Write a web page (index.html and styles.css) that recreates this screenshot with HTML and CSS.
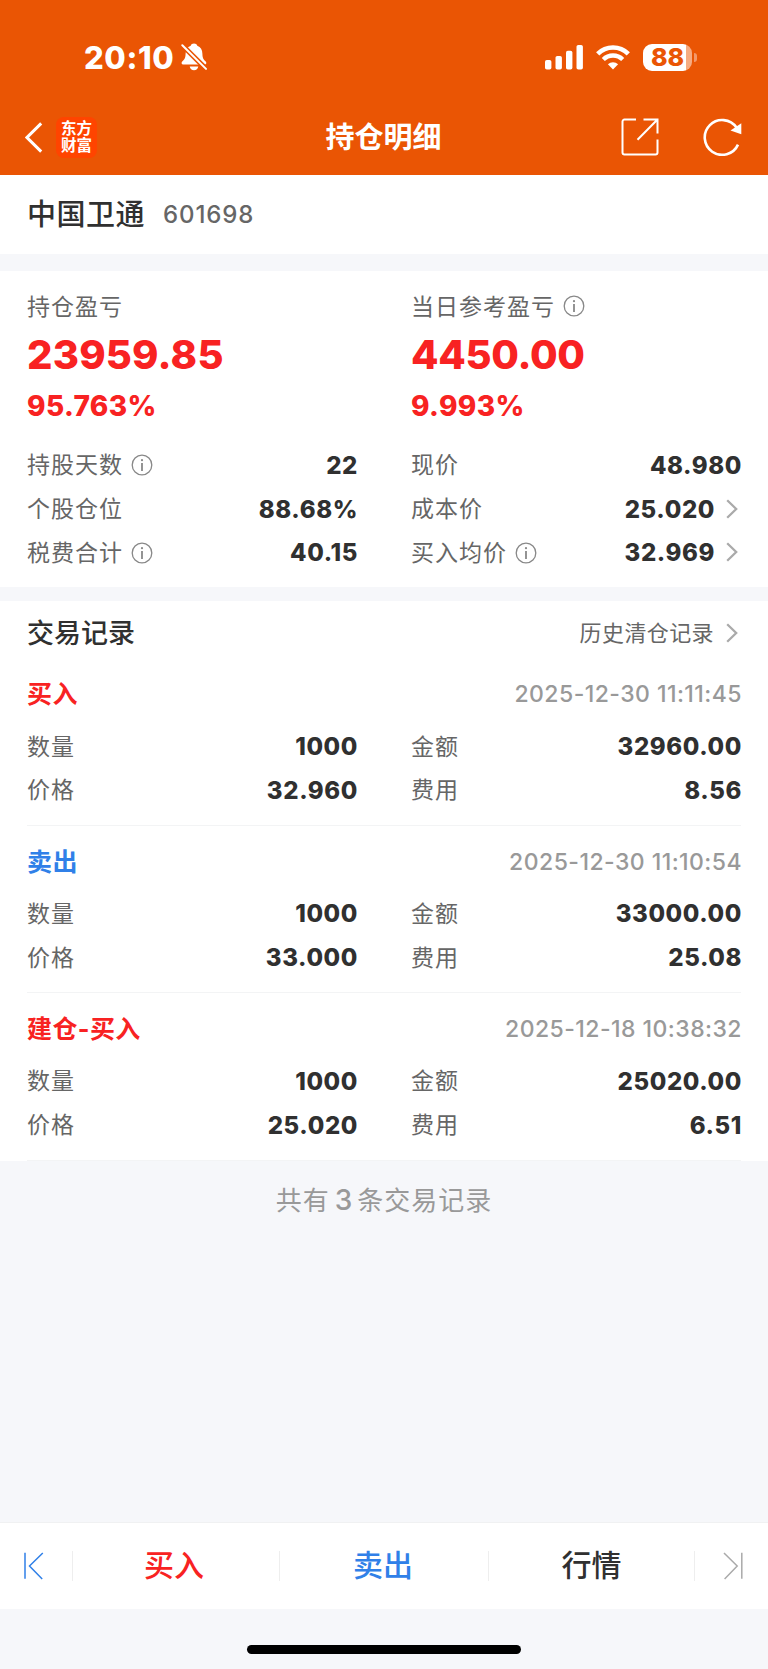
FILE: index.html
```html
<!DOCTYPE html>
<html lang="zh-CN">
<head>
  <meta charset="UTF-8" />
  <meta name="viewport" content="width=device-width, initial-scale=1.0"/>
  <title>持仓明细</title>
  <link rel="stylesheet" href="styles.css">
</head>
<body>
  <!-- shared icons -->
  <svg width="0" height="0" class="sprite">
    <symbol id="info" viewBox="0 0 22 22">
      <circle cx="11" cy="11" r="9.8" fill="none" stroke="currentColor" stroke-width="1.3"/>
      <circle cx="11" cy="6.2" r="1.1" fill="currentColor"/>
      <path d="M11 9v8" stroke="currentColor" stroke-width="1.8"/>
    </symbol>
    <symbol id="arrow" viewBox="0 0 12 20">
      <path d="M1.2 1.2L10.2 10L1.2 18.8" fill="none" stroke="currentColor" stroke-width="2.3"/>
    </symbol>
  </svg>

  <header>
    <div class="status-bar">
      <div class="status-left">
        <span class="clock">20:10</span>
        <svg class="bell" width="26" height="28" viewBox="0 0 26 28" fill="#fff">
          <path d="M13 .5c1.600 0 2.900.9 3.300 2.300 3.500 1.300 5 4.300 5.100 8 .1 4.200 1 5.600 3.300 7.700.9.900.9 2.700-.5 3H1.800c-1.500-.3-1.500-2.100-.6-3 2.300-2.100 3.300-3.500 3.400-7.700.1-3.700 1.600-6.700 5.100-8C10.100 1.400 11.400.5 13 .5z"/>
          <path d="M8.700 23.600h8.600c-.4 2.300-2 3.700-4.300 3.700s-3.900-1.400-4.300-3.700z"/>
          <path d="M1.300 2.300L25 25.900" stroke="#ea5504" stroke-width="5"/>
          <path d="M1.300 2.300L25 25.900" stroke="#fff" stroke-width="2" stroke-linecap="round"/>
        </svg>
      </div>
      <div class="status-right">
        <svg width="38" height="25" viewBox="0 0 38 25" fill="#fff">
          <rect x="0" y="15" width="6.400" height="9.500" rx="1.800"/>
          <rect x="10.500" y="11" width="6.400" height="13.500" rx="1.800"/>
          <rect x="21" y="5.700" width="6.400" height="18.800" rx="1.800"/>
          <rect x="31.500" y="0" width="6.400" height="24.500" rx="1.800"/>
        </svg>
        <svg class="wifi" width="34" height="25" viewBox="0 0 34 25">
          <path d="M1.700 8.800A21.700 21.700 0 0 1 32.300 8.800" fill="none" stroke="#fff" stroke-width="4.600"/>
          <path d="M7.300 14.500A13.800 13.800 0 0 1 26.700 14.500" fill="none" stroke="#fff" stroke-width="4.400"/>
          <path d="M17 24.500L11.900 19.300A7.300 7.300 0 0 1 22.100 19.300z" fill="#fff"/>
        </svg>
        <div class="battery"><span class="battery-level">88</span></div>
        <div class="battery-tip"></div>
      </div>
    </div>
    <nav class="nav-bar">
      <div class="nav-left">
        <svg width="18" height="31" viewBox="0 0 18 31"><path d="M16.200 1.400L2 15.500L16.200 29.600" fill="none" stroke="#fff" stroke-width="3"/></svg>
        <div class="logo">东方<br>财富</div>
      </div>
      <h1>持仓明细</h1>
      <div class="nav-right">
        <svg width="38" height="38" viewBox="0 0 38 38" fill="none" stroke="#fff" stroke-width="2">
          <path d="M15 1.500H3.500a2 2 0 0 0-2 2V34.500a2 2 0 0 0 2 2H34.500a2 2 0 0 0 2-2V21.500"/>
          <path d="M22.500 1.500H36.500V15.500M36 2L16.500 21.800"/>
        </svg>
        <svg width="39" height="38" viewBox="0 0 39 38">
          <path d="M35 26.600A17.400 17.400 0 1 1 33.500 9.600" fill="none" stroke="#fff" stroke-width="2.600"/>
          <path d="M38.300 5.300V16.300L27.500 12.500z" fill="#fff"/>
        </svg>
      </div>
    </nav>
  </header>

  <section class="stock">
    <span class="stock-name">中国卫通</span>
    <span class="stock-code">601698</span>
  </section>

  <section class="summary">
    <div class="column">
      <div class="label"><span class="key">持仓盈亏</span></div>
      <div class="profit total-profit">23959.85</div>
      <div class="percent">95.763%</div>
      <div class="row"><span class="key">持股天数</span><svg class="info"><use href="#info"/></svg><b>22</b></div>
      <div class="row"><span class="key">个股仓位</span><b>88.68%</b></div>
      <div class="row"><span class="key">税费合计</span><svg class="info"><use href="#info"/></svg><b>40.15</b></div>
    </div>
    <div class="column">
      <div class="label"><span class="key">当日参考盈亏</span><svg class="info"><use href="#info"/></svg></div>
      <div class="profit">4450.00</div>
      <div class="percent">9.993%</div>
      <div class="row"><span class="key">现价</span><b>48.980</b></div>
      <div class="row"><span class="key">成本价</span><b>25.020</b><svg class="arrow"><use href="#arrow"/></svg></div>
      <div class="row"><span class="key">买入均价</span><svg class="info"><use href="#info"/></svg><b>32.969</b><svg class="arrow"><use href="#arrow"/></svg></div>
    </div>
  </section>

  <section class="records">
    <div class="records-head">
      <h2>交易记录</h2>
      <a class="history"><span>历史清仓记录</span><svg class="arrow"><use href="#arrow"/></svg></a>
    </div>

    <div class="record">
      <div class="record-head"><span class="type buy">买入</span><span class="time">2025-12-30 11:11:45</span></div>
      <div class="record-grid">
        <div class="row"><span class="key">数量</span><b>1000</b></div>
        <div class="row"><span class="key">金额</span><b>32960.00</b></div>
        <div class="row"><span class="key">价格</span><b>32.960</b></div>
        <div class="row"><span class="key">费用</span><b>8.56</b></div>
      </div>
    </div>

    <div class="record">
      <div class="record-head"><span class="type sell">卖出</span><span class="time">2025-12-30 11:10:54</span></div>
      <div class="record-grid">
        <div class="row"><span class="key">数量</span><b>1000</b></div>
        <div class="row"><span class="key">金额</span><b>33000.00</b></div>
        <div class="row"><span class="key">价格</span><b>33.000</b></div>
        <div class="row"><span class="key">费用</span><b>25.08</b></div>
      </div>
    </div>

    <div class="record">
      <div class="record-head"><span class="type buy">建仓-买入</span><span class="time">2025-12-18 10:38:32</span></div>
      <div class="record-grid">
        <div class="row"><span class="key">数量</span><b>1000</b></div>
        <div class="row"><span class="key">金额</span><b>25020.00</b></div>
        <div class="row"><span class="key">价格</span><b>25.020</b></div>
        <div class="row"><span class="key">费用</span><b>6.51</b></div>
      </div>
    </div>
  </section>

  <div class="total">共有<span class="count">3</span>条交易记录</div>

  <footer>
    <div class="tab-bar">
      <a class="tab-edge first">
        <svg width="20" height="28" viewBox="0 0 20 28" fill="none" stroke="currentColor" stroke-width="1.500"><path d="M1 .8V26.800M18.800 1L5.500 14L18.200 27"/></svg>
      </a>
      <a class="tab buy"><span>买入</span></a>
      <a class="tab middle sell"><span>卖出</span></a>
      <a class="tab"><span>行情</span></a>
      <a class="tab-edge last">
        <svg width="20" height="28" viewBox="0 0 20 28" fill="none" stroke="currentColor" stroke-width="1.500"><path d="M18.800 .8V26.800M1 1L14.200 14L1.600 27"/></svg>
      </a>
    </div>
    <div class="home-indicator"></div>
  </footer>
</body>
</html>
```
FILE: styles.css
```css
* {
  box-sizing: border-box;
}
body {
  margin: 0;
  min-height: 1669px;
  display: flex;
  flex-direction: column;
  background-color: #f6f7fa;
  color: #303030;
  font-family: Inter, "Noto Sans CJK SC", sans-serif;
}
.sprite {
  position: absolute;
}
svg {
  flex: none;
}

/* header */
header {
  height: 175px;
  background-color: #ea5504;
  color: #fff;
}
.status-bar {
  display: flex;
  justify-content: space-between;
  height: 95px;
  padding: 19px 71px 0 84px;
}
.status-left,
.status-right {
  display: flex;
  align-items: center;
}
.clock {
  font-size: 31px;
  font-weight: 800;
  letter-spacing: 0.600px;
}
.bell {
  margin-left: 7px;
}
.wifi {
  margin: 0 13px;
}
.battery {
  width: 49px;
  height: 27px;
  border-radius: 9px;
  background: linear-gradient(to right, #fff 43px, #f6ab82 43px);
}
.battery-level {
  display: block;
  width: 49px;
  line-height: 27px;
  text-align: center;
  font-size: 25px;
  font-weight: 800;
  color: #ea5504;
}
.battery-tip {
  width: 3px;
  height: 9px;
  margin-left: 2px;
  border-radius: 0 4px 4px 0;
  background: #f3986a;
}
.nav-bar {
  display: grid;
  grid-template-columns: 1fr auto 1fr;
  align-items: center;
  height: 84px;
  padding: 0 26px 0 25px;
}
.nav-left,
.nav-right {
  display: flex;
  align-items: center;
}
.nav-left {
  gap: 13px;
}
.nav-right {
  justify-content: flex-end;
  gap: 44px;
}
.logo {
  width: 41px;
  height: 41px;
  padding-top: 3px;
  border-radius: 8px;
  background: #ff4400;
  font-size: 15.500px;
  font-weight: 700;
  line-height: 17.500px;
  text-align: center;
}
h1 {
  margin: 0;
  padding-bottom: 4px;
  font-size: 29px;
  font-weight: 700;
}

/* stock name */
.stock {
  display: flex;
  align-items: center;
  height: 79px;
  padding: 0 27px;
  background: #fff;
}
.stock-name {
  padding-bottom: 5px;
  font-size: 29px;
  font-weight: 500;
  letter-spacing: 0.500px;
}
.stock-code {
  margin-left: 18px;
  font-size: 24px;
  font-weight: 500;
  letter-spacing: 0.900px;
  color: #666;
}

/* profit summary */
.summary {
  display: grid;
  grid-template-columns: 1fr 1fr;
  column-gap: 54px;
  height: 316px;
  margin-top: 17px;
  padding: 17px 27px 0;
  background: #fff;
}
.label {
  display: flex;
  align-items: center;
  height: 37px;
}
.label .info {
  margin-top: -1px;
}
.profit {
  height: 60px;
  line-height: 60px;
  font-size: 40px;
  font-weight: 800;
  letter-spacing: -0.300px;
  color: #f82222;
}
.total-profit {
  letter-spacing: 0.200px;
}
.percent {
  height: 42px;
  margin-bottom: 16px;
  line-height: 42px;
  font-size: 28px;
  font-weight: 800;
  letter-spacing: 0.400px;
  color: #f82222;
}
.row {
  display: flex;
  align-items: center;
  height: 43.700px;
}
.key {
  padding-bottom: 3px;
  font-size: 23px;
  letter-spacing: 1px;
  color: #666;
}
.row b {
  margin: 1px -1px 0 auto;
  font-size: 24px;
  font-weight: 800;
  letter-spacing: 0.600px;
}
.info {
  width: 22px;
  height: 22px;
  margin-top: 1px;
  margin-left: 8px;
  color: #888;
}
.arrow {
  width: 12px;
  height: 20px;
  margin: 0 3px 0 12px;
  color: #aaa;
}

/* trade records */
.records {
  margin-top: 14px;
  padding: 0 27px;
  background: #fff;
}
.records-head {
  display: flex;
  align-items: center;
  justify-content: space-between;
  height: 57.500px;
  padding-top: 6px;
}
h2 {
  margin: 0;
  padding-bottom: 2px;
  font-size: 27px;
  font-weight: 500;
}
.history {
  display: flex;
  align-items: center;
  font-size: 22px;
  letter-spacing: 0.400px;
  color: #666;
}
.history span {
  padding-bottom: 4px;
}
.record {
  height: 167.400px;
  padding-top: 14px;
  border-bottom: 1px solid #f3f4f5;
}
.record-head {
  display: flex;
  align-items: center;
  justify-content: space-between;
  height: 43.700px;
  margin-bottom: 8px;
}
.type {
  padding-bottom: 4px;
  font-size: 25px;
  font-weight: 700;
  letter-spacing: 0.400px;
}
.time {
  margin-right: -1px;
  font-size: 23px;
  font-weight: 500;
  letter-spacing: 0.450px;
  color: #999;
}
.record-grid {
  display: grid;
  grid-template-columns: 1fr 1fr;
  column-gap: 54px;
}
.buy {
  color: #f82222;
}
.sell {
  color: #3080e8;
}
.total {
  padding-top: 19px;
  text-align: center;
  font-size: 26px;
  letter-spacing: 1px;
  color: #999;
}
.count {
  margin: 0 4px 0 5px;
  font-size: 28px;
  font-weight: 500;
}

/* bottom bar */
footer {
  height: 147px;
  margin-top: auto;
}
.tab-bar {
  display: flex;
  align-items: center;
  height: 87px;
  border-top: 1px solid #f0f1f2;
  background: #fff;
}
.tab,
.tab-edge {
  display: flex;
  align-items: center;
  justify-content: center;
  height: 30px;
}
.tab {
  flex: 1;
  border-right: 1px solid #eee;
  font-size: 30px;
  font-weight: 500;
}
.tab span {
  padding-bottom: 6px;
}
.tab.buy {
  flex: 0 0 207px;
  padding-right: 4px;
}
.middle {
  flex: 0 0 209px;
  padding-right: 2px;
}
.tab-edge {
  width: 73px;
}
.first {
  padding-right: 4px;
  border-right: 1px solid #eee;
  color: #3080e8;
}
.last {
  padding-left: 3px;
  color: #aaa;
}
.home-indicator {
  width: 274px;
  height: 9px;
  margin: 36px auto 0;
  border-radius: 5px;
  background: #000;
}
```
